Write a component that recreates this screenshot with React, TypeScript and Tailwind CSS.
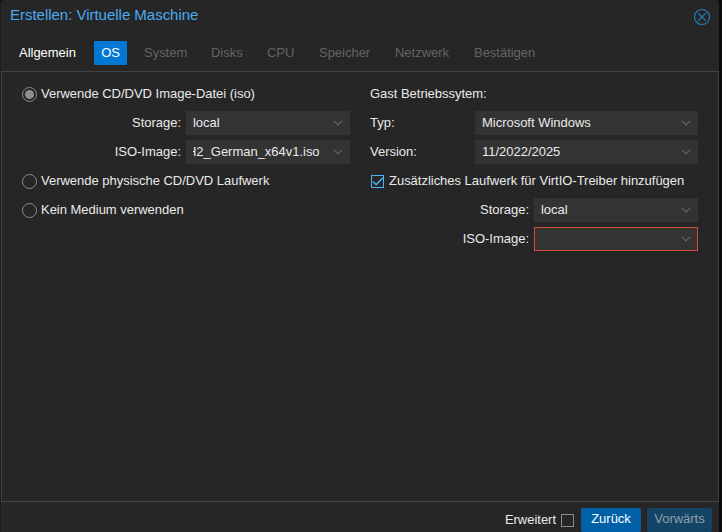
import React from 'react';

function Chevron() {
  return (
    <svg className="mr-[7px] block h-[10px] w-[10px] shrink-0" viewBox="0 0 10 10" fill="none" stroke="#656565" strokeWidth="1.2">
      <path d="M1 2.8 L5 6.8 L9 2.8" />
    </svg>
  );
}

type SelectProps = { className: string; invalid?: boolean; children?: React.ReactNode };

function Select({ className, invalid, children }: SelectProps) {
  return (
    <div className={`flex h-6 shrink-0 items-center justify-between bg-[#333333] ${invalid ? 'border border-[#cf4c35] pl-1.5 [&>svg]:mr-1.5' : 'pl-[7px]'} ${className}`}>
      <div className="flex flex-1 overflow-hidden whitespace-nowrap">{children}</div>
      <Chevron />
    </div>
  );
}

function Radio({ checked, children }: { checked?: boolean; children: React.ReactNode }) {
  return (
    <label className="flex h-6 items-center">
      <span className="mt-[1px] flex size-[15px] shrink-0 items-center justify-center rounded-full border border-[#8c8c8c]">
        {checked && <span className="size-[9px] rounded-full bg-[#8f8f8f]" />}
      </span>
      <span className="ml-1 whitespace-nowrap">{children}</span>
    </label>
  );
}

function Field({ label, labelClass, children }: { label: string; labelClass: string; children: React.ReactNode }) {
  return (
    <div className="flex h-6 items-center">
      <span className={`shrink-0 whitespace-nowrap ${labelClass}`}>{label}</span>
      {children}
    </div>
  );
}

const tabs = [
  { name: 'System', width: 'w-[67px]' },
  { name: 'Disks', width: 'w-[56px]' },
  { name: 'CPU', width: 'w-[52px]' },
  { name: 'Speicher', width: 'w-[76px]' },
  { name: 'Netzwerk', width: 'w-[79px]' },
  { name: 'Bestätigen', width: 'w-[80px]' },
];

export default function App() {
  return (
    <div className="h-[532px] w-[722px] overflow-hidden bg-[#0b0b0b] font-['Liberation_Sans',Arial,sans-serif] text-[13px] leading-[18px] tracking-[-0.02px] text-[#eaeaea]">
      <div className="flex h-full w-[719px] flex-col rounded-t-[3px] border-l border-[#1c1c1c] bg-[#262626]">
        <header className="flex h-8 shrink-0 items-start justify-between pl-[9px] pr-2">
          <h1 className="mt-[5px] text-[15px] leading-5 text-[#4aabf0]">Erstellen: Virtuelle Maschine</h1>
          <svg className="mt-2 size-[18px]" viewBox="0 0 18 18" fill="none" stroke="#1f88bd" strokeWidth="1.1">
            <circle cx="9" cy="9" r="7.5" />
            <path d="M5.2 5.2 L12.8 12.8 M12.8 5.2 L5.2 12.8" />
          </svg>
        </header>
        <nav className="flex h-[39px] shrink-0 items-center pb-[5px] pt-[8px] pl-[18px]">
          <span className="w-[75px] text-white">Allgemein</span>
          <span className="mr-[17px] flex h-6 w-[33px] items-center justify-center rounded-[1px] bg-[#0078d4] text-white">OS</span>
          {tabs.map((tab) => (
            <span key={tab.name} className={`shrink-0 whitespace-nowrap text-[#646464] ${tab.width}`}>{tab.name}</span>
          ))}
        </nav>
        <main className="flex h-[431px] w-[718px] shrink-0 gap-5 border border-[#434343] pl-5 pt-[10px]">
          <section className="flex w-[328px] shrink-0 flex-col gap-[5px]">
            <Radio checked>Verwende CD/DVD Image-Datei (iso)</Radio>
            <Field label="Storage:" labelClass="w-[159px] mr-[5px] text-right">
              <Select className="w-[164px]">local</Select>
            </Field>
            <Field label="ISO-Image:" labelClass="w-[159px] mr-[5px] text-right">
              <Select className="w-[164px]"><span className="-ml-[6px]">H2_German_x64v1.iso</span></Select>
            </Field>
            <Radio>Verwende physische CD/DVD Laufwerk</Radio>
            <Radio>Kein Medium verwenden</Radio>
          </section>
          <section className="flex w-[328px] shrink-0 flex-col gap-[5px]">
            <div className="flex h-6 items-center">Gast Betriebssytem:</div>
            <Field label="Typ:" labelClass="w-[105px]">
              <Select className="w-[223px]">Microsoft Windows</Select>
            </Field>
            <Field label="Version:" labelClass="w-[105px]">
              <Select className="w-[223px]">11/2022/2025</Select>
            </Field>
            <label className="flex h-6 items-center">
              <svg className="ml-[1px] mt-[1px] size-[13px] shrink-0" viewBox="0 0 13 13" fill="none" stroke="#4db2f5">
                <rect x="0.5" y="0.5" width="12" height="12" />
                <path d="M2 6.5 L5.2 9.7 L11.8 2.7" strokeWidth="1.4" />
              </svg>
              <span className="ml-[5px] whitespace-nowrap">Zusätzliches Laufwerk für VirtIO-Treiber hinzufügen</span>
            </label>
            <Field label="Storage:" labelClass="w-[159px] mr-[5px] text-right">
              <Select className="w-[164px]">local</Select>
            </Field>
            <Field label="ISO-Image:" labelClass="w-[159px] mr-[5px] text-right">
              <Select className="w-[164px]" invalid />
            </Field>
          </section>
        </main>
        <footer className="flex flex-1 items-start justify-end pr-[7px] pt-1.5">
          <label className="flex h-6 items-center">
            <span>Erweitert</span>
            <span className="ml-[5px] mr-[7px] mt-[1px] size-[13px] border border-[#8c8c8c]" />
          </label>
          <button className="mr-1.5 h-6 w-[60px] rounded-[2px] bg-[#0060a8] pb-[2px] text-white">Zurück</button>
          <button className="h-6 w-[65px] rounded-[2px] bg-[#134468] pb-[2px] text-[#939ca5]">Vorwärts</button>
        </footer>
      </div>
    </div>
  );
}
